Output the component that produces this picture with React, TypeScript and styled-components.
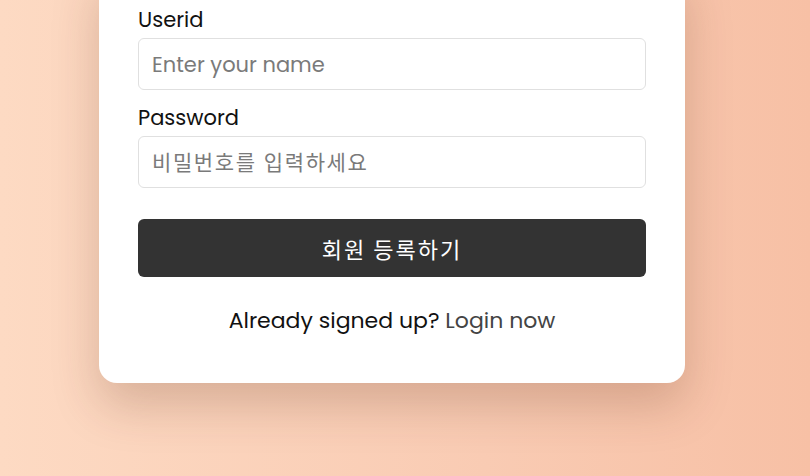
import React from "react";
import styled, { createGlobalStyle } from "styled-components";

const GlobalStyle = createGlobalStyle`
  html, body {
    margin: 0;
    padding: 0;
    height: 100%;
    overflow: hidden;
  }
  body {
    font-family: Poppins, Inter, "Noto Sans CJK KR", sans-serif;
    background: linear-gradient(90deg, #fddac3 0%, #f9cbb3 60%, #f7c0a5 100%);
  }
`;

const Page = styled.div`
  min-height: 476px;
  display: flex;
  align-items: flex-start;
  padding: 0 125px 0 99px;
  box-sizing: border-box;
`;

const Card = styled.form`
  width: 100%;
  margin-top: -35px;
  padding: 40px 39px 47px;
  box-sizing: border-box;
  background: #ffffff;
  border-radius: 18px;
  box-shadow: 0 22px 48px rgba(90, 40, 20, 0.22);
  display: flex;
  flex-direction: column;
`;

const Field = styled.div`
  display: flex;
  flex-direction: column;
  gap: 3px;
  margin-bottom: 13px;
`;

const Label = styled.label`
  font-family: Poppins, Inter, sans-serif;
  font-size: 21px;
  line-height: 30px;
  color: #111;
`;

const Input = styled.input<{ $hangul?: boolean }>`
  height: 52px;
  box-sizing: border-box;
  border: 1px solid #e0e0e0;
  border-radius: 6px;
  padding: 0 13px;
  font-family: Poppins, Inter, "Noto Sans CJK KR", sans-serif;
  font-size: 21px;
  color: #222;
  outline: none;
  &::placeholder {
    color: #7a7a7a;
    letter-spacing: ${(p) => (p.$hangul ? "1.6px" : "normal")};
  }
`;

const Submit = styled.button`
  margin-top: 18px;
  height: 58px;
  border: none;
  border-radius: 6px;
  background: #333333;
  color: #ffffff;
  font-family: "Noto Sans CJK KR", sans-serif;
  font-size: 22px;
  letter-spacing: 2px;
  cursor: pointer;
`;

const Footer = styled.p`
  margin: 28px 0 0;
  text-align: center;
  font-family: Poppins, Inter, sans-serif;
  font-size: 22px;
  line-height: 31px;
  color: #111;
`;

const LoginLink = styled.a`
  color: #444;
  text-decoration: none;
`;

export default function App() {
  return (
    <>
      <GlobalStyle />
      <Page>
        <Card onSubmit={(e) => e.preventDefault()}>
          <Field>
            <Label htmlFor="userid">Userid</Label>
            <Input id="userid" type="text" placeholder="Enter your name" />
          </Field>
          <Field>
            <Label htmlFor="password">Password</Label>
            <Input
              id="password"
              type="password"
              $hangul
              placeholder="비밀번호를 입력하세요"
            />
          </Field>
          <Submit type="submit">회원 등록하기</Submit>
          <Footer>
            Already signed up? <LoginLink href="#">Login now</LoginLink>
          </Footer>
        </Card>
      </Page>
    </>
  );
}
